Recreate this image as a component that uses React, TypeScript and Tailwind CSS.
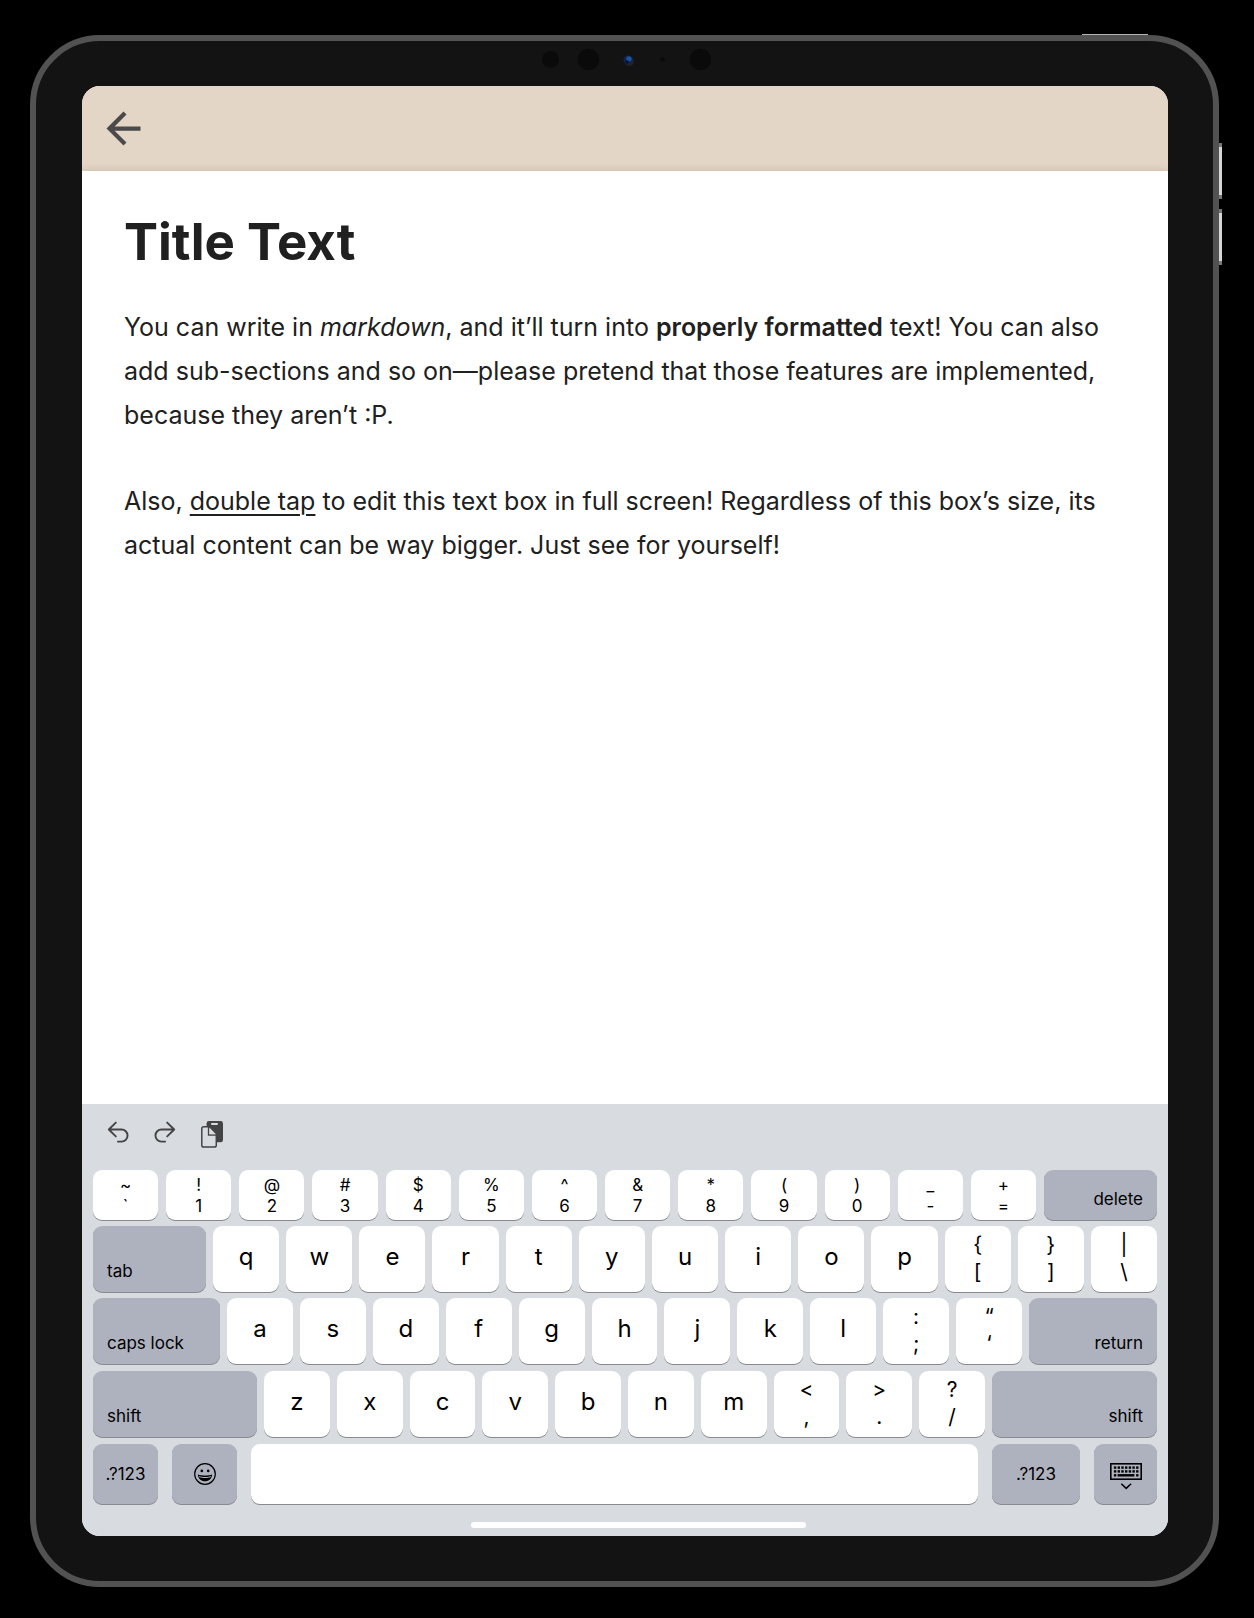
import React from "react";

const keyShadow = "shadow-[0_1px_0_#898a8d]";

function CharKey({ label }: { label: string }) {
  return (
    <button className={`flex min-w-0 flex-1 items-center justify-center rounded-[9px] bg-white pb-1 text-2xl ${keyShadow}`}>
      {label}
    </button>
  );
}

function PairKey({ top, bottom }: { top: string; bottom: string }) {
  return (
    <button className={`flex min-w-0 flex-1 flex-col items-center justify-center rounded-[9px] bg-white pb-0.5 text-[21px] leading-[27px] ${keyShadow}`}>
      <span>{top}</span>
      <span>{bottom}</span>
    </button>
  );
}

function NumberKey({ top, bottom }: { top: string; bottom: string }) {
  return (
    <button className={`flex min-w-0 flex-1 flex-col items-center justify-center rounded-[9px] bg-white pt-0.5 text-[17px] leading-[21px] ${keyShadow}`}>
      <span>{top}</span>
      <span>{bottom}</span>
    </button>
  );
}

function ModKey({ label, width, align = "items-end justify-start" }: { label: string; width: string; align?: string }) {
  return (
    <button className={`flex shrink-0 rounded-[9px] bg-[#aeb2be] px-3.5 pb-[11px] text-[17px] leading-5 ${align} ${width} ${keyShadow}`}>
      {label}
    </button>
  );
}

const numberKeys = [
  ["~", "`"], ["!", "1"], ["@", "2"], ["#", "3"], ["$", "4"], ["%", "5"], ["^", "6"],
  ["&", "7"], ["*", "8"], ["(", "9"], [")", "0"], ["_", "-"], ["+", "="],
];

function UndoIcon() {
  return (
    <svg viewBox="0 0 22 22" className="size-[22px]" fill="none" stroke="#444" strokeWidth="1.9" strokeLinecap="round" strokeLinejoin="round" aria-hidden="true">
      <path d="M8.8 1.6 1.8 8.5l7 6.9M2.2 8.5h12.3a6 6 0 0 1 0 12.1h-3.6" />
    </svg>
  );
}

function PasteIcon() {
  return (
    <svg viewBox="0 0 22 27" className="h-[27px] w-[22px]" fill="none" aria-hidden="true">
      <rect x="5.6" y="0" width="16.4" height="21.3" rx="2.4" fill="#444" />
      <rect x="10" y="2" width="7" height="1.9" rx=".8" fill="#d8dbe0" />
      <path d="M2.8 5.8h5l7.5 7.8v10.6c0 1.1-.7 1.8-1.8 1.8H2.6C1.5 26 .8 25.3.8 24.2V7.6C.8 6.5 1.5 5.8 2.8 5.8Z" fill="#d8dbe0" stroke="#444" strokeWidth="1.5" />
      <path d="M7.6 6v8h7.5" stroke="#444" strokeWidth="1.5" />
      <path d="M8.4 6.6v6.7h6.5z" fill="#d8dbe0" />
    </svg>
  );
}

function EmojiIcon() {
  return (
    <svg viewBox="0 0 22 22" className="size-[22px]" aria-hidden="true">
      <circle cx="11" cy="11" r="10.3" fill="none" stroke="#000" strokeWidth="1.2" />
      <circle cx="7.8" cy="7.9" r="1.3" />
      <circle cx="14.2" cy="7.9" r="1.3" />
      <path d="M3.8 11.5c2.2.8 4.5 1.1 7.2 1.1s5-.3 7.2-1.1c-.4 4-3.3 6.8-7.2 6.8s-6.8-2.8-7.2-6.8Z" />
      <path d="M5 13c1.7.7 3.8 1 6 1s4.3-.3 6-1c-.1.6-.2.9-.5 1.3-1.500.5-3.500.8-5.500.8s-4-.3-5.500-.8c-.3-.4-.4-.7-.5-1.300Z" fill="#aeb2be" />
    </svg>
  );
}

function KeyboardIcon() {
  const cols = [0, 1, 2, 3, 4, 5, 6];
  return (
    <svg viewBox="0 0 32 27" className="h-[27px] w-8" aria-hidden="true">
      <rect x=".8" y=".8" width="30.4" height="15.4" fill="none" stroke="#000" strokeWidth="1.6" />
      {cols.map((c) => (
        <g key={c}>
          <rect x={3.9 + c * 3.7} y="3.4" width="2.4" height="2.4" />
          <rect x={3.9 + c * 3.7} y="7.2" width="2.4" height="2.4" />
        </g>
      ))}
      <rect x="3.9" y="11.1" width="2.4" height="2.4" />
      <rect x="7.6" y="11.1" width="16.8" height="2.4" />
      <rect x="26.1" y="11.1" width="2.4" height="2.4" />
      <path d="m11.3 20.7 4.9 4.7 4.9-4.7" fill="none" stroke="#000" strokeWidth="1.5" />
    </svg>
  );
}

function Keyboard() {
  return (
    <section aria-label="Keyboard" className="relative bg-[#d8dbe0] px-[11px] pb-2 text-black">
      <div className="flex h-[66px] items-start gap-[25px] pt-[17px] pl-3.5">
        <button aria-label="Undo"><UndoIcon /></button>
        <button aria-label="Redo" className="-scale-x-100"><UndoIcon /></button>
        <button aria-label="Paste"><PasteIcon /></button>
      </div>
      <div className="flex h-[50px] gap-2">
        {numberKeys.map(([t, b]) => <NumberKey key={b} top={t} bottom={b} />)}
        <ModKey label="delete" width="w-[113px]" align="items-end justify-end" />
      </div>
      <div className="mt-1.5 flex h-[66px] gap-[7px]">
        <ModKey label="tab" width="w-[113px]" />
        {[..."qwertyuiop"].map((k) => <CharKey key={k} label={k} />)}
        <PairKey top="{" bottom="[" />
        <PairKey top="}" bottom="]" />
        <PairKey top="|" bottom="\" />
      </div>
      <div className="mt-1.5 flex h-[66px] gap-[7px]">
        <ModKey label="caps lock" width="w-[127px]" />
        {[..."asdfghjkl"].map((k) => <CharKey key={k} label={k} />)}
        <PairKey top=":" bottom=";" />
        <PairKey top="“" bottom="‘" />
        <ModKey label="return" width="w-32" align="items-end justify-end" />
      </div>
      <div className="mt-[7px] flex h-[66px] gap-[7px]">
        <ModKey label="shift" width="w-[164px]" />
        {[..."zxcvbnm"].map((k) => <CharKey key={k} label={k} />)}
        <PairKey top="<" bottom="," />
        <PairKey top=">" bottom="." />
        <PairKey top="?" bottom="/" />
        <ModKey label="shift" width="w-[165px]" align="items-end justify-end" />
      </div>
      <div className="mt-[7px] flex h-[60px] gap-3.5">
        <button className={`w-[65px] shrink-0 rounded-[9px] bg-[#aeb2be] pt-0.5 text-[17px] ${keyShadow}`}>.?123</button>
        <button aria-label="Emoji" className={`flex w-[65px] shrink-0 items-center justify-center rounded-[9px] bg-[#aeb2be] ${keyShadow}`}><EmojiIcon /></button>
        <button aria-label="Space" className={`flex-1 rounded-[9px] bg-white ${keyShadow}`} />
        <button className={`w-[88px] shrink-0 rounded-[9px] bg-[#aeb2be] pt-0.5 text-[17px] ${keyShadow}`}>.?123</button>
        <button aria-label="Hide keyboard" className={`flex w-[63px] shrink-0 items-center justify-center rounded-[9px] bg-[#aeb2be] pt-1 ${keyShadow}`}><KeyboardIcon /></button>
      </div>
      <div className="mt-[18px] ml-[35.5%] h-1.5 w-[31.5%] rounded-full bg-white" />
    </section>
  );
}

export default function App() {
  return (
    <div className="flex min-h-screen bg-black pt-[35px] pr-[35px] pb-[31px] pl-[30px] font-['Inter',sans-serif]">
      <div className="relative flex flex-1 rounded-[70px] border-6 border-[#525252] bg-[#131313] p-[45px] pl-[46px]">
        <div className="absolute -top-[7px] right-[65px] h-px w-[66px] bg-[#b5b3b5]" />
        <div className="absolute top-[102px] -right-[9px] h-[56px] w-[3px] border-y-4 border-[#777] bg-[#d6d6d6]" />
        <div className="absolute top-[168px] -right-[9px] h-[56px] w-[3px] border-y-4 border-[#777] bg-[#d6d6d6]" />
        <svg viewBox="0 0 172 24" className="absolute top-[7px] left-1/2 h-6 w-[172px] -translate-x-1/2" aria-hidden="true">
          <circle cx="11.5" cy="11.5" r="8.5" fill="#0a0a0a" />
          <circle cx="49.5" cy="11.5" r="10.7" fill="#0a0a0a" />
          <circle cx="90.5" cy="13.5" r="4.5" fill="#252225" />
          <circle cx="89" cy="12" r="4.5" fill="#12254f" />
          <circle cx="90" cy="10.8" r="2.6" fill="#1d539c" />
          <circle cx="88" cy="14" r="1.8" fill="#0a1230" />
          <circle cx="123.5" cy="11.5" r="2.2" fill="#0a0a0a" />
          <circle cx="161.5" cy="11.5" r="10.7" fill="#0a0a0a" />
        </svg>
        <main className="flex min-w-0 flex-1 flex-col overflow-hidden rounded-[18px] bg-white">
          <header className="flex h-[85px] items-center bg-[#e3d6c6] px-4">
            <button aria-label="Back">
              <svg viewBox="0 0 24 24" className="size-[51px]" fill="#4a4a4a" aria-hidden="true">
                <path d="M20 11H7.83l5.59-5.59L12 4l-8 8 8 8 1.41-1.41L7.83 13H20v-2z" />
              </svg>
            </button>
          </header>
          <article className="relative flex-1 px-[42px] pt-[41px] text-[25px] leading-[44px] text-[#202020] shadow-[0_0_8px_rgba(90,60,40,0.2)]">
            <h1 className="text-[51px] leading-[60px] font-bold">Title Text</h1>
            <p className="mt-[33px]">
              You can write in <em>markdown</em>, and it’ll turn into{" "}
              <strong className="font-semibold">properly formatted</strong> text! You can also add sub-sections and so
              on—please pretend that those features are implemented, because they aren’t :P.
            </p>
            <p className="mt-[42px]">
              Also, <span className="underline decoration-2 underline-offset-4">double tap</span> to edit this text box
              in full screen! Regardless of this box’s size, its actual content can be way bigger. Just see for
              yourself!
            </p>
          </article>
          <Keyboard />
        </main>
      </div>
    </div>
  );
}
